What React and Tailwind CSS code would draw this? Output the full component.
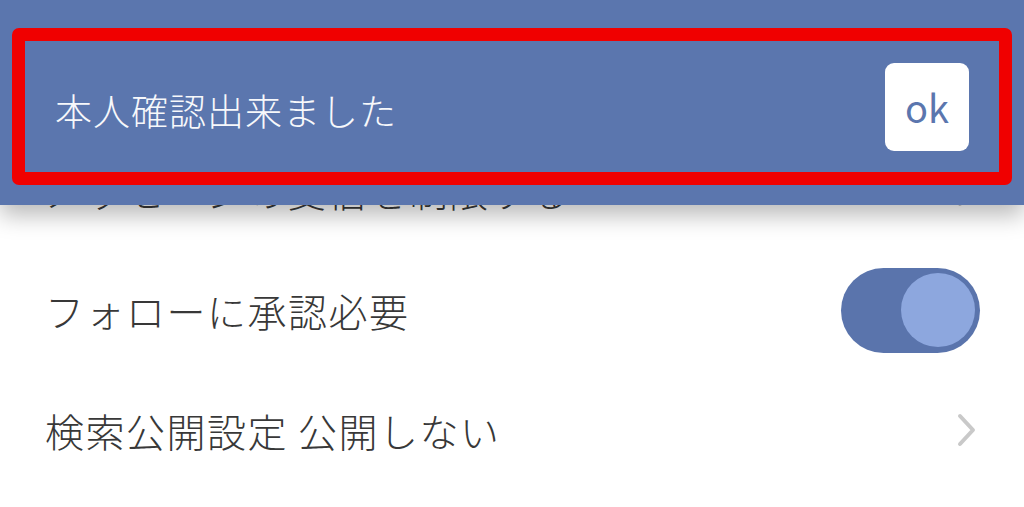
import React from 'react';

const rows = [
  { label: 'メッセージの受信を制限する', kind: 'chevron' },
  { label: 'フォローに承認必要', kind: 'toggle' },
  { label: '検索公開設定 公開しない', kind: 'chevron' },
];

function Toggle() {
  return (
    <div className="flex h-[85px] w-[139px] items-center justify-end rounded-full bg-[#5a74ac] pr-[5px]">
      <div className="h-[74px] w-[74px] rounded-full bg-[#8da7de]"></div>
    </div>
  );
}

function Chevron() {
  return (
    <svg width="22" height="36" viewBox="0 0 22 36" fill="none" className="mr-[2px]">
      <path d="M4 4 L17 18 L4 32" stroke="#c9c9c9" strokeWidth="4" strokeLinecap="round" strokeLinejoin="round" />
    </svg>
  );
}

export default function App() {
  return (
    <div className="relative h-[507px] w-[1024px] overflow-hidden bg-white font-['Noto_Sans_CJK_JP','Noto_Sans',sans-serif]">
      {/* settings list underneath */}
      <div className="flex flex-col pt-[130px]">
        {rows.map(row => (
          <div key={row.label} className="flex h-[120px] items-center justify-between pl-[45px] pr-[44px]">
            <span className="text-[39px] font-light leading-none tracking-[1.5px] text-[#383838]">{row.label}</span>
            {row.kind === 'toggle' ? <Toggle /> : <Chevron />}
          </div>
        ))}
      </div>

      {/* snackbar banner over the list */}
      <div className="absolute left-0 right-0 top-0 h-[205px] bg-[#5b76ae] px-[12px] pt-[28px] shadow-[0_10px_22px_rgba(0,0,0,0.28)]">
        <div className="flex h-[157px] items-center justify-between rounded-[7px] border-[13px] border-[#f00000] pl-[30px] pr-[30px]">
          <span className="pt-[8px] text-[37px] font-light leading-none tracking-[1px] text-[#f7f8fb]">本人確認出来ました</span>
          <button className="flex h-[88px] w-[84px] items-center justify-center rounded-[9px] bg-white text-[38px] leading-none text-[#5b76ae]">
            ok
          </button>
        </div>
      </div>
    </div>
  );
}
